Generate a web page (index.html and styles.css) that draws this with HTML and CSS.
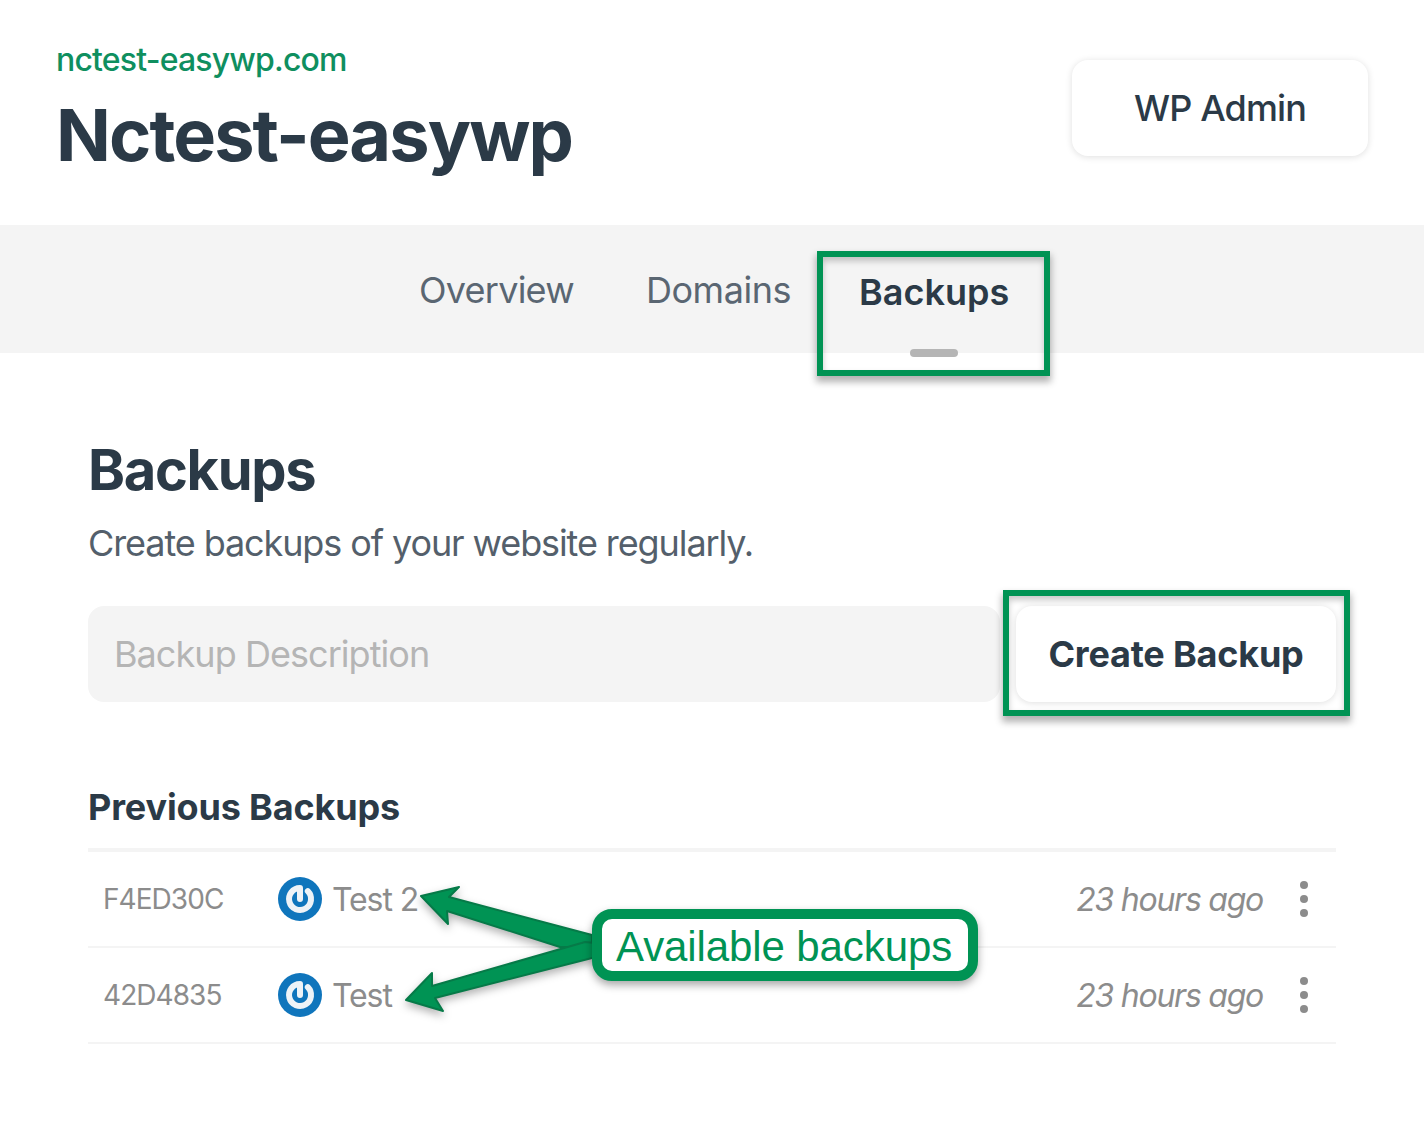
FILE: index.html
```html
<!DOCTYPE html>
<html lang="en">
<head>
<meta charset="utf-8">
<title>Nctest-easywp backups</title>
<link rel="stylesheet" href="styles.css">
</head>
<body>
<div class="page">
  <header class="site-header">
    <div class="site-id">
      <a class="domain">nctest-easywp.com</a>
      <h1 class="site-name">Nctest-easywp</h1>
    </div>
    <button class="btn btn-admin">WP Admin</button>
  </header>
  <nav class="tabs">
    <a class="tab tab-overview">Overview</a>
    <a class="tab tab-domains">Domains</a>
    <a class="tab tab-active">Backups</a>
  </nav>
  <main class="content">
    <h2 class="section-title">Backups</h2>
    <p class="section-sub">Create backups of your website regularly.</p>
    <div class="create-row">
      <div class="input">Backup Description</div>
      <button class="btn btn-create">Create Backup</button>
    </div>
    <h3 class="list-title">Previous Backups</h3>
    <ul class="list">
      <li class="row">
        <span class="hash">F4ED30C</span>
        <svg class="power" viewBox="0 0 44 44"><use href="#power"/></svg>
        <span class="name">Test 2</span>
        <em class="time">23 hours ago</em>
        <span class="dots"><i></i><i></i><i></i></span>
      </li>
      <li class="row">
        <span class="hash">42D4835</span>
        <svg class="power" viewBox="0 0 44 44"><use href="#power"/></svg>
        <span class="name">Test</span>
        <em class="time">23 hours ago</em>
        <span class="dots"><i></i><i></i><i></i></span>
      </li>
    </ul>
  </main>

  <svg class="defs" width="0" height="0">
    <symbol id="power" viewBox="0 0 44 44">
      <circle cx="22" cy="22" r="22" fill="#0f75bc"/>
      <path d="M22 22V11a11 11 0 1 0 7.8 3.2" fill="none" stroke="#eef3f7" stroke-width="6" stroke-linecap="round" stroke-linejoin="round"/>
    </symbol>
  </svg>

  <div class="frame frame-tab"></div>
  <div class="frame frame-create"></div>
  <svg class="arrows" viewBox="0 0 1424 1126">
    <g class="arrow-shapes">
      <path d="M421 896L459 887L449 897L592 935L592 947L560 947L447 911L448 924Z"/>
      <path d="M406 1000L432 973L432 986L585 942L596 943L596 957L435 998L443 1011Z"/>
    </g>
  </svg>
  <div class="callout">Available backups</div>
</div>
</body>
</html>
```
FILE: styles.css
```css
* { box-sizing: border-box; }
html, body { margin: 0; background: #fff; }
body { font-family: Inter, "Noto Sans", sans-serif; color: #2b3a47; }
.page { position: relative; width: 1424px; height: 1126px; overflow: hidden; }

.site-header { height: 225px; padding: 40px 56px 0; display: flex; justify-content: space-between; align-items: flex-start; }
.domain { display: block; font-size: 32px; line-height: 40px; font-weight: 500; letter-spacing: -.82px; color: #0f8f5f; }
.site-name { margin: 19px 0 0; font-size: 72px; line-height: 72px; font-weight: 700; letter-spacing: -1.9px; color: #2b3a47; }

.btn { border: 0; background: #fff; border-radius: 16px; font-family: inherit; color: #2b3a47; font-size: 36px; box-shadow: 0 1px 7px rgba(0,0,0,.13); }
.btn-admin { width: 296px; height: 96px; margin-top: 20px; font-weight: 500; letter-spacing: -.9px; }
.btn-create { width: 320px; height: 96px; font-weight: 700; letter-spacing: -.2px; }

.tabs { height: 128px; background: #f4f4f4; display: flex; padding-left: 419px; font-size: 36px; color: #5a6672; }
.tab { line-height: 130px; }
.tab-overview { margin-right: 72px; letter-spacing: -.75px; }
.tab-domains { margin-right: 68px; letter-spacing: -.45px; }
.tab-active { position: relative; font-weight: 600; color: #2b3a47; line-height: 134px; }
.tab-active::after { content: ""; position: absolute; left: 51px; bottom: -4px; width: 48px; height: 8px; border-radius: 4px; background: #b5b5b5; }

.content { padding: 0 88px; }
.section-title { margin: 85px 0 0; font-size: 56px; line-height: 64px; font-weight: 700; letter-spacing: -1.3px; color: #2b3a47; }
.section-sub { margin: 19px 0 0; font-size: 36px; line-height: 44px; color: #545f6b; letter-spacing: -1.1px; }
.create-row { display: flex; gap: 16px; margin-top: 41px; }
.input { flex: 1; height: 96px; border-radius: 16px; background: #f4f4f4; padding-left: 26px; font-size: 36px; line-height: 96px; letter-spacing: -.95px; color: #b5b5b5; }
.list-title { margin: 83px 0 0; font-size: 36px; line-height: 44px; font-weight: 700; letter-spacing: -.15px; color: #2b3a47; }
.list { margin: 19px 0 0; padding: 0; list-style: none; border-top: 4px solid #f4f4f4; }
.row { height: 96px; display: flex; align-items: center; border-bottom: 2px solid #f4f4f4; padding: 0 16px; color: #8c8c8c; font-size: 32px; }
.hash { width: 174px; font-size: 28px; letter-spacing: -.95px; margin-left: -1px; padding-right: 0; flex: none; }
.power { width: 44px; height: 44px; margin-left: 1px; margin-right: 10px; }
.name { flex: 1; letter-spacing: -1.1px; }
.time { font-size: 32px; letter-spacing: -1.25px; margin-right: 33px; }
.dots { width: 16px; display: flex; flex-direction: column; align-items: center; gap: 6px; margin-right: 8px; }
.dots i { width: 8px; height: 8px; border-radius: 50%; background: #8c8c8c; }

.defs { position: absolute; }
.frame { position: absolute; border: 6px solid #009354; box-shadow: 0 5px 7px 1px rgba(0,0,0,.3), inset 0 4px 6px rgba(0,0,0,.22); }
.frame-tab { left: 817px; top: 251px; width: 233px; height: 125px; }
.frame-create { left: 1003px; top: 590px; width: 347px; height: 126px; }
.arrows { position: absolute; left: 0; top: 0; width: 1424px; height: 1126px; pointer-events: none; }
.arrow-shapes { fill: #009354; stroke: #067a48; stroke-width: 2; stroke-linejoin: round; filter: drop-shadow(0 4px 4px rgba(0,0,0,.3)); }
.callout { position: absolute; left: 592px; top: 909px; width: 386px; height: 72px; border: 10px solid #009354; border-radius: 20px; background: #fff; color: #009354; font-family: "Liberation Sans", Arial, sans-serif; font-size: 42px; letter-spacing: -.1px; line-height: 56px; padding-left: 14px; box-shadow: 0 4px 8px rgba(0,0,0,.35); white-space: nowrap; }
```
